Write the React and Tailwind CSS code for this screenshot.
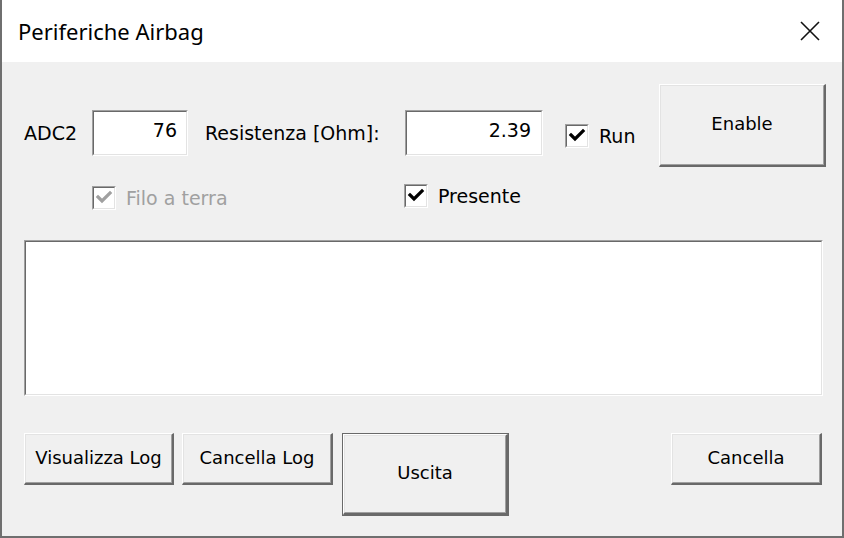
import React from 'react';

const font = { fontFamily: '"DejaVu Sans", Tahoma, sans-serif' };

function Sunken({ className = '', children }) {
  // classic 3D sunken edge (text box / list box)
  return (
    <div className={`border-t border-l border-t-[#a0a0a0] border-l-[#a0a0a0] border-b border-r border-b-white border-r-white ${className}`}>
      <div className="h-full w-full border-t border-l border-t-[#696969] border-l-[#696969] border-b border-r border-b-[#e3e3e3] border-r-[#e3e3e3] bg-white">
        {children}
      </div>
    </div>
  );
}

function Raised({ className = '', children }) {
  return (
    <div className={`border-t border-l border-t-white border-l-white border-b-2 border-r-2 border-b-[#696969] border-r-[#696969] ${className}`}>
      <div className="h-full w-full border-t border-l border-t-[#e3e3e3] border-l-[#e3e3e3] border-b border-r border-b-[#a0a0a0] border-r-[#a0a0a0] bg-[#f0f0f0] flex items-center justify-center text-[18px] text-black">
        {children}
      </div>
    </div>
  );
}

function CheckBox({ label, disabled }) {
  return (
    <div className="flex items-center">
      <Sunken className="w-[24px] h-[24px]">
        <svg width="20" height="20" viewBox="0 0 20 20" className="block">
          <path
            d="M4 9 L8 13 L16 5"
            fill="none"
            stroke={disabled ? '#a0a0a0' : '#000'}
            strokeWidth="3.2"
            strokeLinecap="square"
          />
        </svg>
      </Sunken>
      <span className={`ml-[10px] text-[19px] ${disabled ? 'text-[#a0a0a0]' : 'text-black'}`}>{label}</span>
    </div>
  );
}

export default function App() {
  return (
    <div style={font} className="w-[844px] h-[538px] bg-[#f0f0f0] border-l-2 border-r-2 border-b-2 border-[#6f6f6f] flex flex-col overflow-hidden">
      {/* title bar */}
      <div className="h-[62px] bg-white flex items-center justify-between pl-[16px] pr-[22px] shrink-0">
        <span className="text-[22px] text-black" style={{ fontFamily: '"Noto Sans", "Open Sans", sans-serif' }}>
          Periferiche Airbag
        </span>
        <svg width="20" height="20" viewBox="0 0 20 20">
          <path d="M1 1 L19 19 M19 1 L1 19" stroke="#111" strokeWidth="1.6" fill="none" />
        </svg>
      </div>

      <div className="flex-1 flex flex-col pt-[22px]">
        {/* row 1 */}
        <div className="flex items-start h-[82px] pl-[22px]">
          <div className="flex items-center h-[46px] mt-[26px]">
            <span className="w-[68px] text-[19px] text-black">ADC2</span>
            <Sunken className="w-[96px] h-[46px]">
              <div className="text-right pr-[9px] pt-[4px] text-[19px] text-black">76</div>
            </Sunken>
            <span className="ml-[17px] w-[200px] text-[19px] text-black whitespace-nowrap">Resistenza [Ohm]:</span>
            <Sunken className="w-[138px] h-[46px]">
              <div className="text-right pr-[10px] pt-[4px] text-[19px] text-black">2.39</div>
            </Sunken>
            <div className="ml-[22px] mt-[6px]">
              <CheckBox label="Run" />
            </div>
          </div>
          <Raised className="ml-auto mr-[16px] w-[167px] h-[83px]">
            <span className="-mt-[4px]">Enable</span>
          </Raised>
        </div>

        {/* row 2 */}
        <div className="flex mt-[18px] h-[24px] pl-[90px]">
          <div className="w-[312px]">
            <CheckBox label="Filo a terra" disabled />
          </div>
          <CheckBox label="Presente" />
        </div>

        {/* list box */}
        <div className="pl-[22px] mt-[32px]">
          <Sunken className="w-[799px] h-[156px]" />
        </div>

        {/* bottom buttons */}
        <div className="flex items-start pl-[22px] mt-[37px]">
          <Raised className="w-[150px] h-[52px]">
            <span className="-mt-[3px] whitespace-nowrap">Visualizza Log</span>
          </Raised>
          <Raised className="ml-[8px] w-[151px] h-[52px]">
            <span className="-mt-[3px] whitespace-nowrap">Cancella Log</span>
          </Raised>
          <div className="ml-[9px] w-[167px] h-[83px] border border-[#696969]">
            <Raised className="w-full h-full">
              <span className="-mt-[3px]">Uscita</span>
            </Raised>
          </div>
          <Raised className="ml-auto mr-[20px] w-[151px] h-[52px]">
            <span className="-mt-[3px]">Cancella</span>
          </Raised>
        </div>
      </div>
    </div>
  );
}
